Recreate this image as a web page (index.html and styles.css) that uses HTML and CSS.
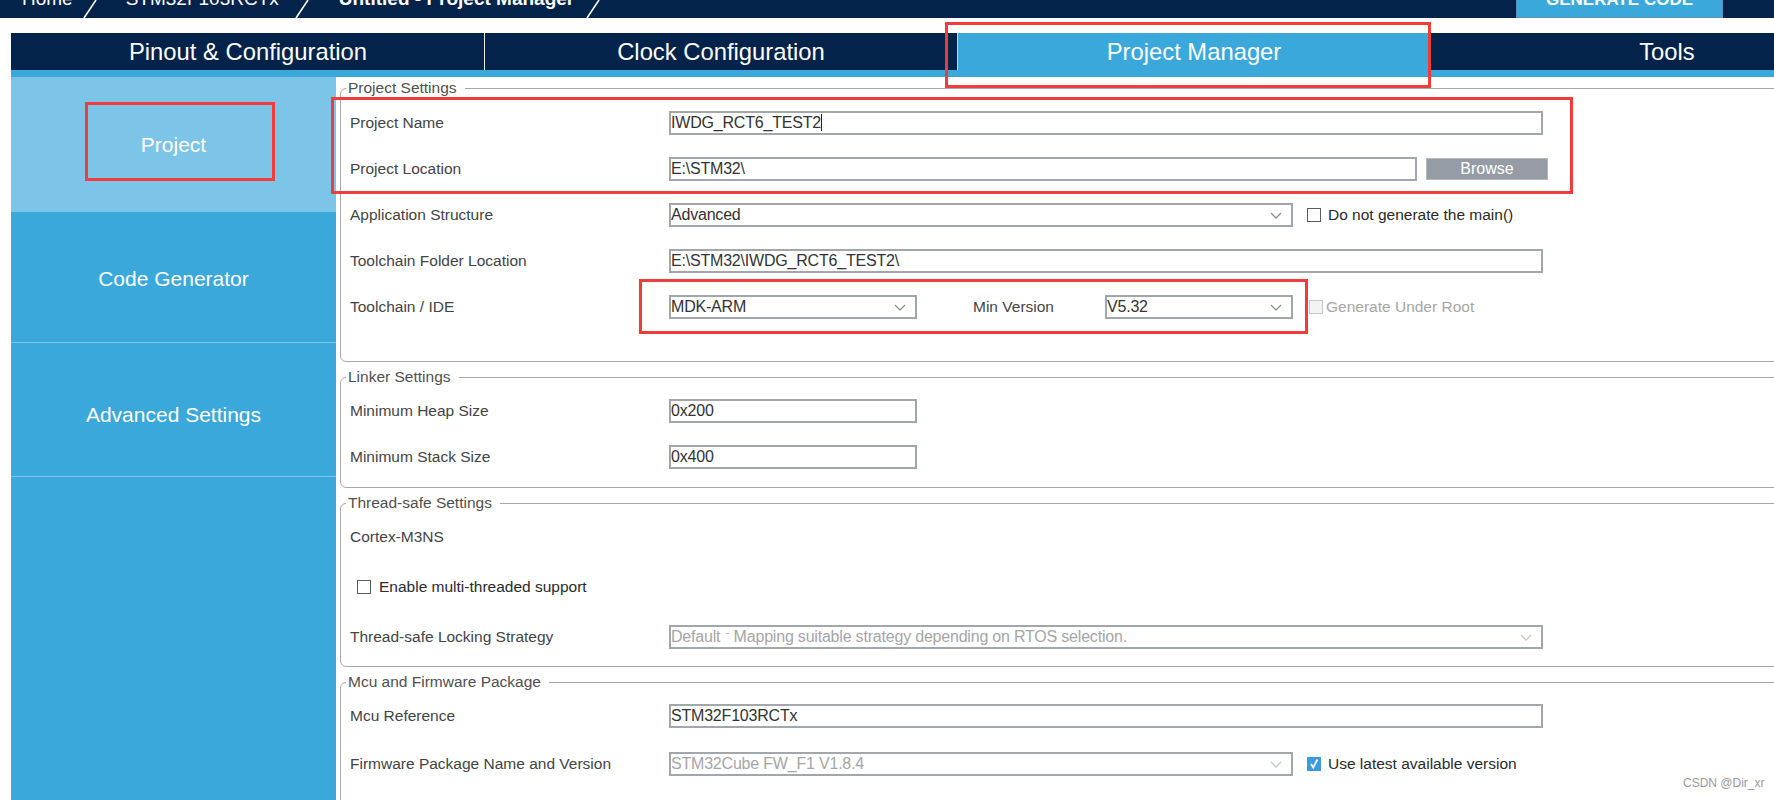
FILE: index.html
```html
<!DOCTYPE html>
<html>
<head>
<meta charset="utf-8">
<link rel="stylesheet" href="styles.css">
</head>
<body>
<header class="topbar">
  <span class="crumb crumb-home">Home</span>
  <svg class="sep sep1" width="14" height="18" viewBox="0 0 14 18"><line x1="1" y1="18" x2="13" y2="0"/></svg>
  <span class="crumb crumb-mcu">STM32F103RCTx</span>
  <svg class="sep sep2" width="14" height="18" viewBox="0 0 14 18"><line x1="1" y1="18" x2="13" y2="0"/></svg>
  <span class="crumb crumb-cur">Untitled - Project Manager</span>
  <svg class="sep sep3" width="14" height="18" viewBox="0 0 14 18"><line x1="1" y1="18" x2="13" y2="0"/></svg>
  <div class="gen-btn"><span>GENERATE CODE</span></div>
</header>

<div class="app">
  <nav class="tabs">
    <div class="tab">Pinout &amp; Configuration</div>
    <div class="tab tab-sep">Clock Configuration</div>
    <div class="tab tab-active">Project Manager</div>
    <div class="tab">Tools</div>
  </nav>
  <div class="strip"></div>

  <div class="workspace">
    <aside class="side">
      <div class="side-item side-active side-project">Project</div>
      <div class="side-item side-code">Code Generator</div>
      <div class="side-item side-adv">Advanced Settings</div>
    </aside>

    <main class="content">
      <fieldset class="group group-project">
        <legend>Project Settings</legend>
        <div class="row">
          <div class="label">Project Name</div>
          <div class="field w-full"><span class="caret">IWDG_RCT6_TEST2</span></div>
        </div>
        <div class="row">
          <div class="label">Project Location</div>
          <div class="field w-loc">E:\STM32\</div>
          <div class="browse">Browse</div>
        </div>
        <div class="row">
          <div class="label">Application Structure</div>
          <div class="field select w-mid">Advanced
            <svg class="chev" width="12" height="8" viewBox="0 0 12 8"><polyline points="1,1 6,6 11,1"/></svg>
          </div>
          <span class="check"></span>
          <span class="check-label">Do not generate the main()</span>
        </div>
        <div class="row">
          <div class="label">Toolchain Folder Location</div>
          <div class="field w-full">E:\STM32\IWDG_RCT6_TEST2\</div>
        </div>
        <div class="row">
          <div class="label">Toolchain / IDE</div>
          <div class="field select w-small">MDK-ARM
            <svg class="chev" width="12" height="8" viewBox="0 0 12 8"><polyline points="1,1 6,6 11,1"/></svg>
          </div>
          <div class="label-inline">Min Version</div>
          <div class="field select w-ver">V5.32
            <svg class="chev" width="12" height="8" viewBox="0 0 12 8"><polyline points="1,1 6,6 11,1"/></svg>
          </div>
          <span class="check check-disabled check-root"></span>
          <span class="check-label disabled-text">Generate Under Root</span>
        </div>
      </fieldset>

      <fieldset class="group group-linker">
        <legend>Linker Settings</legend>
        <div class="row">
          <div class="label">Minimum Heap Size</div>
          <div class="field w-small">0x200</div>
        </div>
        <div class="row">
          <div class="label">Minimum Stack Size</div>
          <div class="field w-small">0x400</div>
        </div>
      </fieldset>

      <fieldset class="group group-thread">
        <legend>Thread-safe Settings</legend>
        <div class="row row-tall">
          <div class="label">Cortex-M3NS</div>
        </div>
        <div class="row row-tall">
          <span class="check check-first"></span>
          <span class="check-label">Enable multi-threaded support</span>
        </div>
        <div class="row row-tall">
          <div class="label">Thread-safe Locking Strategy</div>
          <div class="field select w-full disabled-text">Default <span class="dash">&#8315;</span> Mapping suitable strategy depending on RTOS selection.
            <svg class="chev chev-dis" width="12" height="8" viewBox="0 0 12 8"><polyline points="1,1 6,6 11,1"/></svg>
          </div>
        </div>
      </fieldset>

      <fieldset class="group group-mcu">
        <legend>Mcu and Firmware Package</legend>
        <div class="row">
          <div class="label">Mcu Reference</div>
          <div class="field w-full">STM32F103RCTx</div>
        </div>
        <div class="row row-gap">
          <div class="label">Firmware Package Name and Version</div>
          <div class="field select w-mid disabled-text">STM32Cube FW_F1 V1.8.4
            <svg class="chev chev-dis" width="12" height="8" viewBox="0 0 12 8"><polyline points="1,1 6,6 11,1"/></svg>
          </div>
          <span class="check check-on">
            <svg width="12" height="12" viewBox="0 0 12 12"><polyline points="3,6 5.2,9.5 9.5,1.5"/></svg>
          </span>
          <span class="check-label">Use latest available version</span>
        </div>
      </fieldset>
    </main>
  </div>
</div>

<div class="anno anno-tab"></div>
<div class="anno anno-side"></div>
<div class="anno anno-name"></div>
<div class="anno anno-tool"></div>
<div class="watermark">CSDN @Dir_xr</div>
</body>
</html>
```

FILE: styles.css
```css
html, body {
  margin: 0;
  padding: 0;
}
body {
  width: 1774px;
  height: 800px;
  overflow: hidden;
  position: relative;
  background: #ffffff;
  font-family: "Liberation Sans", Arial, sans-serif;
}

/* ---------- top bar ---------- */
.topbar {
  height: 18px;
  background: #04234b;
  display: flex;
  align-items: flex-start;
  overflow: hidden;
}
.crumb {
  color: #ffffff;
  font-size: 19px;
  line-height: 22px;
  margin-top: -12px;
  white-space: nowrap;
}
.crumb-home { margin-left: 22px; }
.crumb-mcu { margin-left: 29px; }
.crumb-cur { margin-left: 30px; font-weight: bold; }
.sep { flex: 0 0 14px; }
.sep line { stroke: #ffffff; stroke-width: 1.6; }
.sep1 { margin-left: 10px; }
.sep2 { margin-left: 16px; }
.sep3 { margin-left: 12px; }
.gen-btn {
  margin-left: auto;
  margin-right: 51px;
  width: 207px;
  height: 18px;
  box-sizing: border-box;
  background: #3aa8db;
  border: 1px solid #5b8fbf;
  border-top: none;
  display: flex;
  justify-content: center;
  align-items: flex-start;
}
.gen-btn span {
  color: #ffffff;
  font-weight: bold;
  font-size: 17px;
  line-height: 20px;
  margin-top: -10px;
  white-space: nowrap;
}

/* ---------- tabs ---------- */
.app {
  margin-left: 11px;
}
.tabs {
  margin-top: 15px;
  height: 37px;
  width: 1892px;
  display: flex;
  background: #04234b;
}
.tab {
  flex: 0 0 473px;
  box-sizing: border-box;
  color: #ffffff;
  font-size: 23.8px;
  display: flex;
  align-items: center;
  justify-content: center;
  border-left: 1px solid #04234b;
}
.tab-sep { border-left: 1px solid #e6ebf0; }
.tab-active {
  background: #3aa8db;
  border-left: 1px solid #c9d3dc;
}
.strip {
  height: 7px;
  background: #3aa8db;
}

/* ---------- workspace ---------- */
.workspace {
  display: flex;
  height: 723px;
}
.side {
  flex: 0 0 325px;
  background: #3aa8db;
}
.side-item {
  box-sizing: border-box;
  color: #ffffff;
  font-size: 21px;
  display: flex;
  align-items: center;
  justify-content: center;
  border-bottom: 1px solid #7ec5e9;
}
.side-project { height: 135px; padding-top: 1px; }
.side-code { height: 131px; padding-top: 4px; }
.side-adv { height: 134px; padding-top: 10px; }
.side-active { background: #7cc5e8; }

.content {
  flex: 1 1 auto;
  margin-right: -24px;
  padding: 2px 0 0 4px;
}

/* ---------- fieldsets ---------- */
.group {
  margin: 0 0 6px 0;
  padding: 0;
  border: 1px solid #a4a9ae;
  border-radius: 6px;
  min-width: 0;
}
.group legend {
  margin-left: 5px;
  padding: 0 8px 0 2px;
  font-size: 15.5px;
  line-height: 18px;
  color: #505050;
}
.group-project { padding-top: 3px; padding-bottom: 31px; }
.group-linker { padding-top: 2px; padding-bottom: 7px; }
.group-thread { padding-top: 0; padding-bottom: 4px; }
.group-mcu { padding-top: 2px; padding-bottom: 20px; }

.row {
  display: flex;
  align-items: center;
  height: 46px;
  padding-left: 9px;
}
.row-tall { height: 50px; }
.row-gap { margin-top: 2px; }

.label {
  flex: 0 0 319px;
  font-size: 15.5px;
  color: #444444;
  white-space: nowrap;
}
.label-inline {
  flex: 0 0 132px;
  margin-left: 56px;
  font-size: 15.5px;
  color: #444444;
}

.field {
  position: relative;
  box-sizing: border-box;
  height: 24px;
  border: 2px solid #a2a7ac;
  background: #ffffff;
  font-size: 16px;
  line-height: 20px;
  color: #333333;
  padding-left: 0;
  letter-spacing: -0.2px;
  white-space: nowrap;
  overflow: hidden;
}
.w-full { flex: 0 0 874px; }
.w-loc { flex: 0 0 748px; }
.w-mid { flex: 0 0 624px; }
.w-small { flex: 0 0 248px; }
.w-ver { flex: 0 0 188px; }

.caret {
  border-right: 1px solid #222222;
  padding-right: 0;
}
.chev {
  position: absolute;
  right: 9px;
  top: 7px;
}
.chev polyline {
  fill: none;
  stroke: #8a8f94;
  stroke-width: 1.3;
}
.chev-dis polyline { stroke: #c4c7ca; }

.browse {
  flex: 0 0 122px;
  margin-left: 9px;
  height: 22px;
  box-sizing: border-box;
  background: #959ca3;
  border: 1px solid #b3b8bd;
  color: #ffffff;
  font-size: 16px;
  display: flex;
  align-items: center;
  justify-content: center;
}

.check {
  flex: 0 0 14px;
  height: 14px;
  box-sizing: border-box;
  border: 1px solid #5c5c5c;
  background: #ffffff;
  margin-left: 14px;
  margin-right: 7px;
  display: flex;
  align-items: center;
  justify-content: center;
}
.check-root { margin-left: 16px; margin-right: 3px; }
.check-disabled {
  border-color: #c6c8ca;
  background: #f3f3f3;
}
.check-first { margin-left: 7px; margin-right: 8px; }
.check-on {
  background: #3a9be0;
  border-color: #3a9be0;
}
.check-on polyline {
  fill: none;
  stroke: #ffffff;
  stroke-width: 1.8;
}
.check-label {
  font-size: 15.5px;
  color: #2a2a2a;
  white-space: nowrap;
}
.disabled-text { color: #a6a6a6; }
.dash { font-size: 14px; }

/* ---------- annotations (overlays) ---------- */
.anno {
  position: absolute;
  box-sizing: border-box;
  border: 3px solid #f23b3b;
}
.anno-tab { left: 945px; top: 22px; width: 486px; height: 66px; }
.anno-side { left: 85px; top: 102px; width: 190px; height: 79px; }
.anno-name { left: 331px; top: 97px; width: 1242px; height: 97px; }
.anno-tool { left: 639px; top: 279px; width: 669px; height: 55px; }

.watermark {
  position: absolute;
  left: 1683px;
  top: 776px;
  font-size: 12px;
  color: #9a9a9a;
  font-family: "Liberation Sans", Arial, sans-serif;
}
```
